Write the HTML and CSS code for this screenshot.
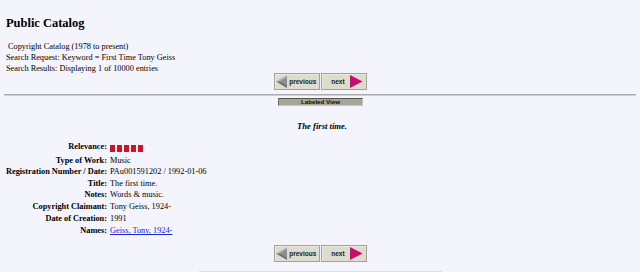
FILE: index.html
```html
<!DOCTYPE html>
<html>
<head>
<meta charset="utf-8">
<title>Public Catalog</title>
<link rel="stylesheet" href="styles.css">
</head>
<body>
<h1 class="title">Public Catalog</h1>
<div class="info">
  <div class="info-line indent">Copyright Catalog (1978 to present)</div>
  <div class="info-line">Search Request: Keyword = First Time Tony Geiss</div>
  <div class="info-line">Search Results: Displaying 1 of 10000 entries</div>
</div>
<div class="nav">
  <a class="btn btn-prev" href="#">
    <svg class="arrow" width="11" height="13" viewBox="0 0 11 13"><polygon points="11,0 0,6.5 11,6.5" fill="#b4b4b0"/><polygon points="0,6.5 11,6.5 11,13" fill="#6c6c6a"/><polygon points="11,2 3.5,6.5 11,11" fill="#8e8e8a"/></svg>
    <span>previous</span>
  </a>
  <a class="btn btn-next" href="#">
    <span>next</span>
    <svg class="arrow arrow-next" width="12.5" height="13" viewBox="0 0 12.5 13"><polygon points="0,0 12.5,6.5 0,13" fill="#c3106c"/></svg>
  </a>
</div>
<div class="rule"></div>
<div class="view">Labeled View</div>
<div class="heading">The first time.</div>
<div class="record">
  <div class="k rel">Relevance:</div>
  <div class="v rel"><span class="sq"></span><span class="sq"></span><span class="sq"></span><span class="sq"></span><span class="sq"></span></div>
  <div class="k">Type of Work:</div>
  <div class="v">Music</div>
  <div class="k">Registration Number / Date:</div>
  <div class="v">PAu001591202 / 1992-01-06</div>
  <div class="k">Title:</div>
  <div class="v">The first time.</div>
  <div class="k">Notes:</div>
  <div class="v">Words &amp; music.</div>
  <div class="k">Copyright Claimant:</div>
  <div class="v">Tony Geiss, 1924-</div>
  <div class="k">Date of Creation:</div>
  <div class="v">1991</div>
  <div class="k names">Names:</div>
  <div class="v names"><a class="link" href="#">Geiss, Tony, 1924-</a></div>
</div>
<div class="nav nav-bottom">
  <a class="btn btn-prev" href="#">
    <svg class="arrow" width="11" height="13" viewBox="0 0 11 13"><polygon points="11,0 0,6.5 11,6.5" fill="#b4b4b0"/><polygon points="0,6.5 11,6.5 11,13" fill="#6c6c6a"/><polygon points="11,2 3.5,6.5 11,11" fill="#8e8e8a"/></svg>
    <span>previous</span>
  </a>
  <a class="btn btn-next" href="#">
    <span>next</span>
    <svg class="arrow arrow-next" width="12.5" height="13" viewBox="0 0 12.5 13"><polygon points="0,0 12.5,6.5 0,13" fill="#c3106c"/></svg>
  </a>
</div>
<div class="foot-rule"></div>
</body>
</html>
```
FILE: styles.css
```css
html, body {
  background: #f4f4fc;
}
body {
  margin: 0;
  padding: 0 4px;
  font-family: "Liberation Serif", "Times New Roman", serif;
  font-size: 8.3px;
  color: #000;
  overflow: hidden;
}
.title {
  margin: 15.6px 0 0;
  padding-left: 2px;
  font-size: 12.45px;
  line-height: 15px;
  font-weight: bold;
}
.info {
  margin-top: 10.8px;
  padding-left: 2px;
  line-height: 11px;
}
.info-line.indent {
  padding-left: 2px;
}
.nav {
  display: flex;
  justify-content: center;
  gap: 1.5px;
  margin-top: -1.1px;
  padding-left: 1px;
}
.btn {
  box-sizing: border-box;
  width: 45.5px;
  height: 16.7px;
  display: flex;
  align-items: center;
  background: #deddcd;
  border: 1px solid #a2a29b;
  box-shadow: inset 1px 1px 0 #ecebe0;
  font-family: "Liberation Sans", Arial, sans-serif;
  font-weight: bold;
  font-size: 6.5px;
  color: #1c1c1c;
  text-decoration: none;
}
.btn-prev {
  padding-left: 1px;
}
.btn-prev .arrow {
  margin-right: 2px;
  flex: none;
}
.btn-next {
  padding-left: 9px;
  padding-right: 3px;
}
.arrow-next {
  margin-left: auto;
  flex: none;
}
.rule {
  margin-top: 4px;
  border-top: 1px solid #a9a9b1;
  border-bottom: 1px solid #cfcfd7;
}
.view {
  box-sizing: border-box;
  width: 85.6px;
  height: 7.2px;
  margin: 2.5px auto 0;
  position: relative;
  left: 0.5px;
  background: #a6a696;
  border-top: 1px solid #55554e;
  border-left: 1px solid #6e6e66;
  border-right: 1px solid #c4c4b6;
  border-bottom: 1px solid #c4c4b6;
  font-family: "Liberation Sans", Arial, sans-serif;
  font-weight: bold;
  font-size: 6.2px;
  line-height: 5.6px;
  text-align: center;
  color: #111;
}
.heading {
  margin-top: 15.4px;
  padding-left: 4px;
  text-align: center;
  font-style: italic;
  font-weight: bold;
  font-size: 8.6px;
  line-height: 11px;
}
.record {
  display: grid;
  grid-template-columns: 103px auto;
  column-gap: 3px;
  margin-top: 9.3px;
  line-height: 11.6px;
}
.k {
  text-align: right;
  font-weight: bold;
  white-space: nowrap;
}
.v {
  white-space: nowrap;
}
.rel {
  padding-bottom: 1.7px;
}
.names {
  padding-top: 1.1px;
}
.sq {
  display: inline-block;
  width: 5px;
  height: 7px;
  margin-right: 2px;
  background: #d3102a;
  vertical-align: -3px;
}
.link {
  color: #2424d4;
  text-decoration: underline;
}
.nav-bottom {
  margin-top: 8.5px;
}
.foot-rule {
  width: 243px;
  margin: 8.7px auto 0;
  border-top: 1px solid #dcdce5;
}
```
